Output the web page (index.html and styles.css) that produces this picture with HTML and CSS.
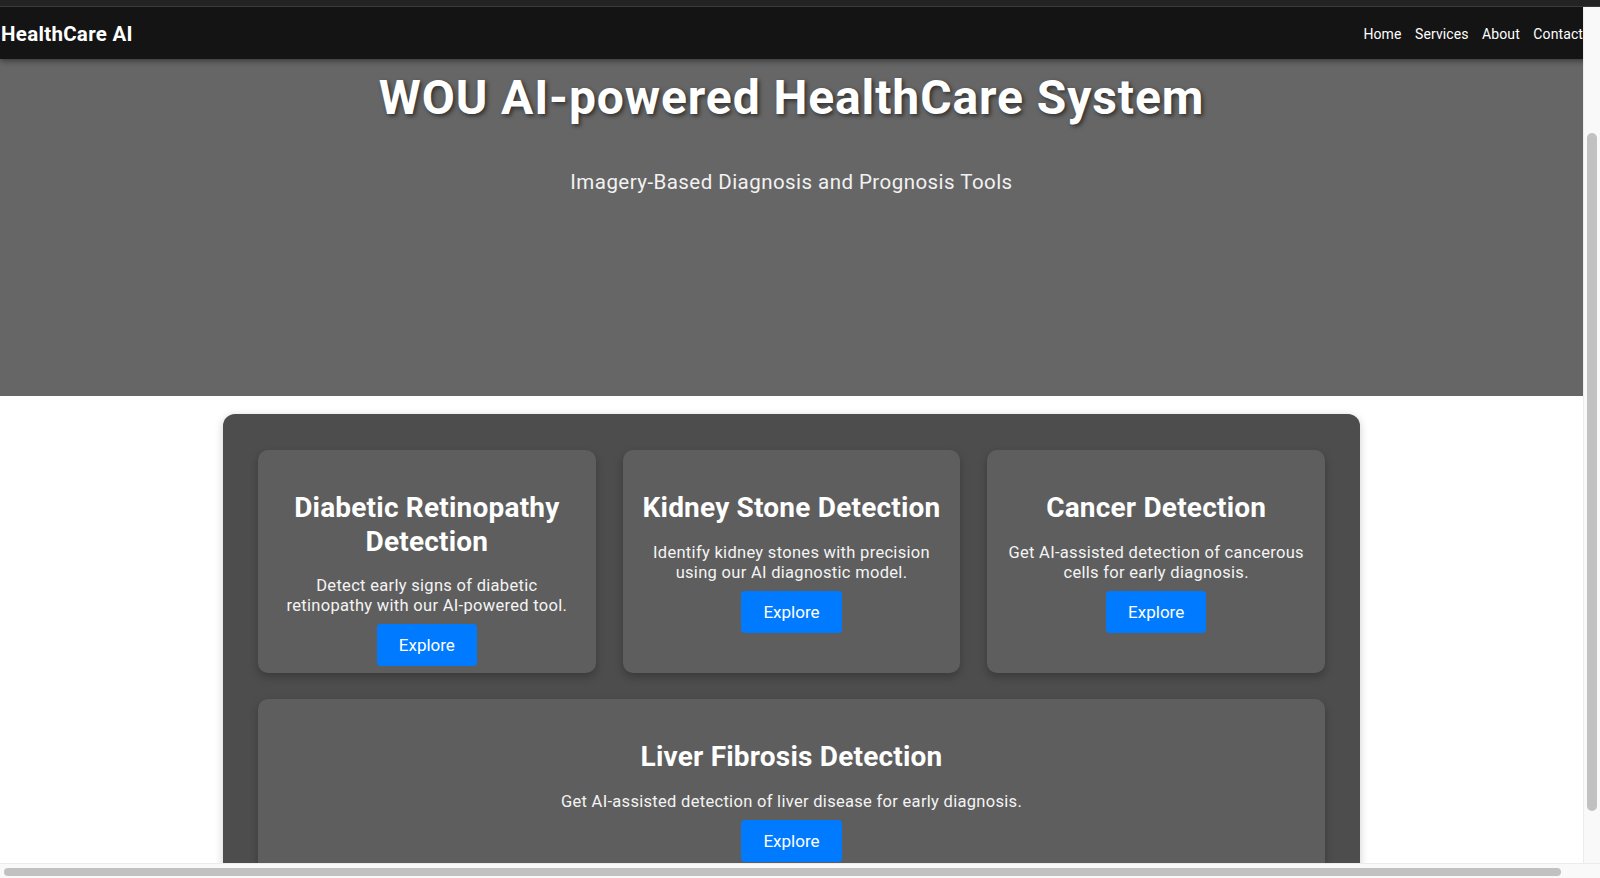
FILE: index.html
```html
<!DOCTYPE html>
<html lang="en">
<head>
<meta charset="utf-8">
<title>HealthCare AI</title>
<link rel="stylesheet" href="styles.css">
</head>
<body>
<div class="screen">
  <div class="topstrip"></div>
  <div class="viewport">
    <header class="navbar">
      <div class="logo">HealthCare AI</div>
      <nav class="links">
        <a href="#">Home</a>
        <a href="#">Services</a>
        <a href="#">About</a>
        <a href="#">Contact</a>
      </nav>
    </header>
    <section class="hero">
      <h1>WOU AI-powered HealthCare System</h1>
      <p>Imagery-Based Diagnosis and Prognosis Tools</p>
    </section>
    <section class="services">
      <div class="grid">
        <div class="card">
          <h2>Diabetic Retinopathy Detection</h2>
          <p>Detect early signs of diabetic retinopathy with our AI-powered tool.</p>
          <a class="btn" href="#">Explore</a>
        </div>
        <div class="card">
          <h2>Kidney Stone Detection</h2>
          <p>Identify kidney stones with precision using our AI diagnostic model.</p>
          <a class="btn" href="#">Explore</a>
        </div>
        <div class="card">
          <h2>Cancer Detection</h2>
          <p>Get AI-assisted detection of cancerous cells for early diagnosis.</p>
          <a class="btn" href="#">Explore</a>
        </div>
        <div class="card wide">
          <h2>Liver Fibrosis Detection</h2>
          <p>Get AI-assisted detection of liver disease for early diagnosis.</p>
          <a class="btn" href="#">Explore</a>
        </div>
      </div>
    </section>
  </div>
  <div class="vscroll"><div class="vthumb"></div></div>
  <div class="hscroll"><div class="hthumb"></div></div>
</div>
</body>
</html>
```

FILE: styles.css
```css
html, body {
  margin: 0;
  padding: 0;
  overflow: hidden;
  background: #ffffff;
}

body {
  font-family: Roboto, "Liberation Sans", Arial, sans-serif;
}

.screen {
  display: grid;
  grid-template-columns: 1583px 17px;
  grid-template-rows: 7px 856px 15px;
  width: 1600px;
  height: 878px;
}

.topstrip {
  grid-column: 1 / 3;
  background: #232323;
  border-bottom: 1px solid #3a3a3a;
  box-sizing: border-box;
}

.viewport {
  overflow: hidden;
  background: #ffffff;
}

.navbar {
  position: relative;
  z-index: 2;
  display: flex;
  align-items: center;
  justify-content: space-between;
  width: 1600px;
  height: 52px;
  box-sizing: border-box;
  padding: 0 17px 0 1px;
  background: #141414;
  box-shadow: 0 2px 6px rgba(0, 0, 0, 0.45);
}

.logo {
  color: #ffffff;
  font-size: 20.5px;
  font-weight: 700;
  letter-spacing: 0.3px;
  padding-top: 1px;
}

.links {
  display: flex;
  gap: 13.5px;
  padding-top: 2px;
}

.links a {
  color: #ffffff;
  text-decoration: none;
  font-size: 14px;
  letter-spacing: 0.1px;
}

.hero {
  height: 337px;
  box-sizing: border-box;
  padding-top: 10px;
  background: #666666;
  text-align: center;
  color: #ffffff;
}

.hero h1 {
  margin: 0 0 44px;
  font-size: 48px;
  font-weight: 700;
  line-height: normal;
  letter-spacing: 0.9px;
  text-shadow: 2px 2px 4px rgba(0, 0, 0, 0.55);
}

.hero p {
  margin: 0;
  font-size: 20.5px;
  letter-spacing: 0.45px;
  line-height: normal;
  color: #f2f2f2;
}

.services {
  width: 1137px;
  margin: 18px auto 0;
  box-sizing: border-box;
  padding: 36px 35px 35px;
  background: #4d4d4d;
  border-radius: 12px;
  box-shadow: 0 2px 8px rgba(0, 0, 0, 0.2);
}

.grid {
  display: grid;
  grid-template-columns: repeat(3, 1fr);
  column-gap: 27px;
  row-gap: 26px;
}

.card {
  display: flex;
  flex-direction: column;
  align-items: center;
  padding: 41px 12px 7px;
  background: #5e5e5e;
  border-radius: 10px;
  box-shadow: 0 4px 8px rgba(0, 0, 0, 0.25);
  text-align: center;
  color: #ffffff;
}

.card.wide {
  grid-column: 1 / 4;
  padding-bottom: 30px;
}

.card h2 {
  margin: 0 0 18px;
  font-size: 28px;
  font-weight: 700;
  line-height: 1.2;
  letter-spacing: 0.2px;
}

.card p {
  margin: 0 0 8px;
  max-width: 300px;
  font-size: 16.5px;
  letter-spacing: 0.3px;
  line-height: 20px;
  color: #f4f4f4;
}

.card.wide p {
  max-width: none;
}

.btn {
  display: block;
  padding: 11px 22px;
  background: #007bff;
  border-radius: 4px;
  color: #ffffff;
  text-decoration: none;
  font-size: 17px;
  line-height: normal;
}

.vscroll {
  background: #f9f9f9;
  border-left: 1px solid #ececec;
  box-sizing: border-box;
  padding: 126px 3px 0 3px;
}

.vthumb {
  width: 10px;
  height: 678px;
  background: #c1c1c1;
  border-radius: 5px;
}

.hscroll {
  grid-column: 1 / 3;
  background: #f9f9f9;
  border-top: 1px solid #ececec;
  box-sizing: border-box;
  padding: 4px 0 0 4px;
}

.hthumb {
  width: 1557px;
  height: 8px;
  background: #c1c1c1;
  border-radius: 4px;
}
```
